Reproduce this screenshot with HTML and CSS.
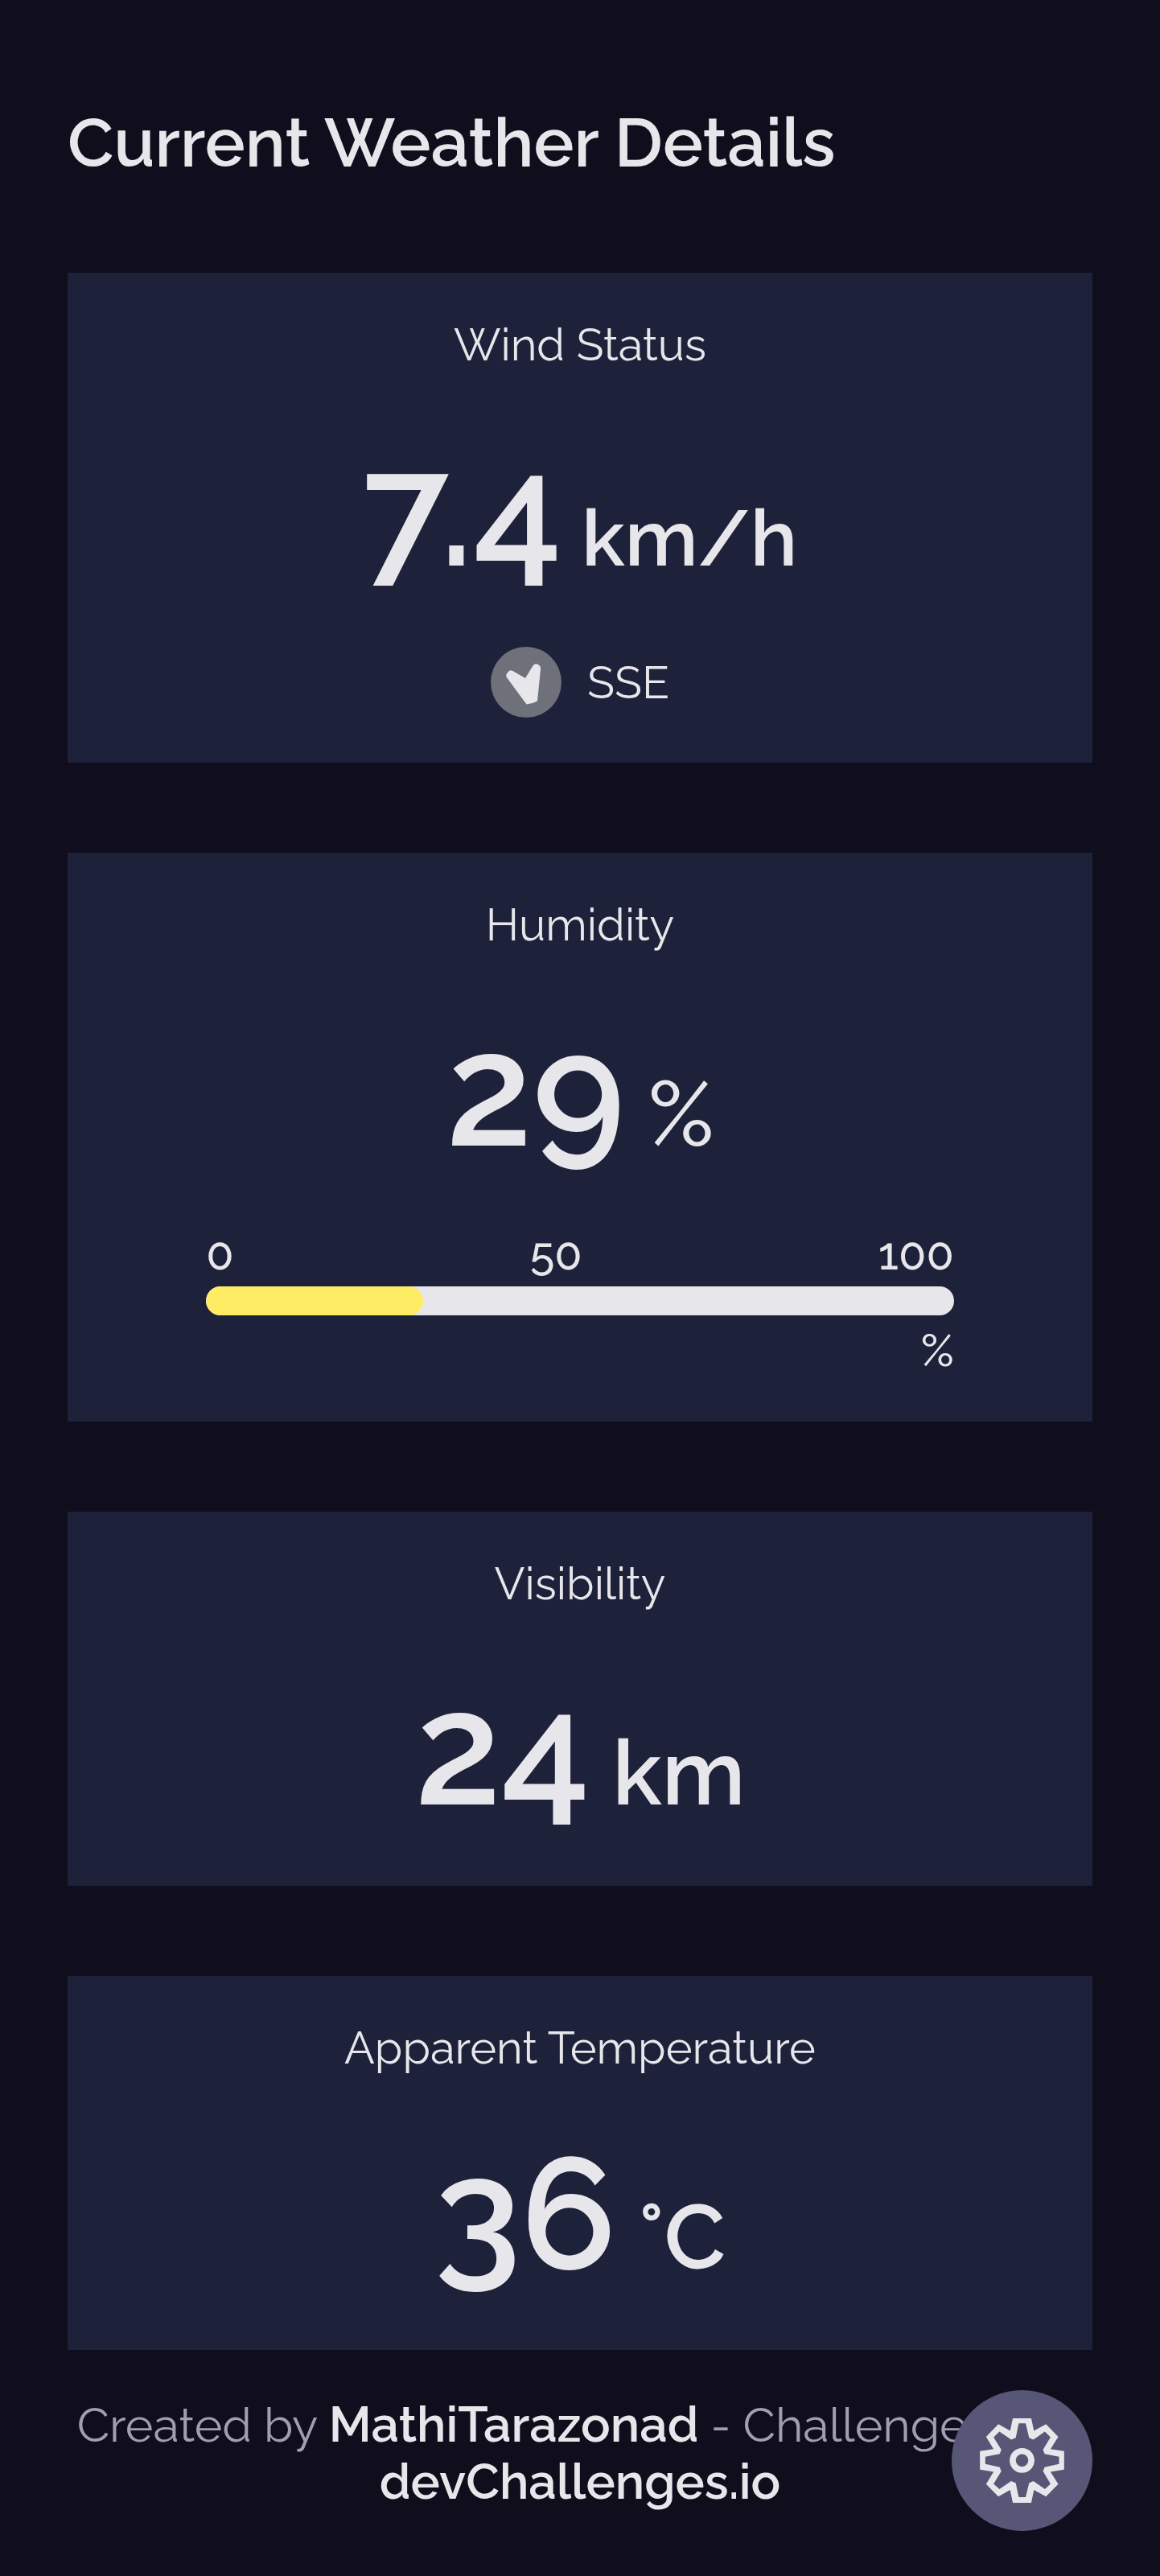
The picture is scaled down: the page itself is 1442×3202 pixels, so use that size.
FILE: index.html
```html
<!DOCTYPE html>
<html lang="en">
<head>
  <meta charset="utf-8">
  <meta name="viewport" content="width=device-width, initial-scale=1">
  <title>Weather App</title>
  <link rel="stylesheet" href="styles.css">
</head>
<body>
  <main class="details">
    <h1 class="details__title">Current Weather Details</h1>

    <section class="card card--extra">
      <h2 class="card__label">Wind Status</h2>
      <p class="card__value">7.4<span class="unit unit--speed"> km/h</span></p>
      <div class="wind">
        <svg class="wind__arrow" viewBox="0 0 88 88" aria-hidden="true">
          <circle cx="44" cy="44" r="44" fill="#6e707a"/>
          <path d="M19.500 37.500Q18.500 34.500 21 32Q23.500 28 27.500 30L43 39L52.500 23.500Q55 20 59 22Q62.500 24 62 28L58 67.500Q51.500 71 44.500 71.500Z" fill="#e7e7eb"/>
        </svg>
        <span class="wind__direction">SSE</span>
      </div>
    </section>

    <section class="card card--extra">
      <h2 class="card__label">Humidity</h2>
      <p class="card__value">29<span class="unit unit--percent"> %</span></p>
      <div class="meter">
        <div class="meter__scale"><span>0</span><span>50</span><span>100</span></div>
        <div class="meter__track"><div class="meter__fill" style="width: 29%"></div></div>
        <div class="meter__unit">%</div>
      </div>
    </section>

    <section class="card">
      <h2 class="card__label">Visibility</h2>
      <p class="card__value">24<span class="unit"> km</span></p>
    </section>

    <section class="card">
      <h2 class="card__label">Apparent Temperature</h2>
      <p class="card__value">36<span class="unit"> °C</span></p>
    </section>
  </main>

  <footer class="footer">
    Created by <a class="footer__link" href="#">MathiTarazonad</a> - Challenge from
    <a class="footer__link" href="#">devChallenges.io</a>
  </footer>

  <button class="settings" type="button" aria-label="Settings">
    <svg class="settings__icon" viewBox="144 139 315 316" aria-hidden="true">
      <path fill="currentColor" fill-rule="evenodd" d="M267 139H336L346 186L391 161L437 208L408 254L459 262V331L408 339L437 385L391 432L346 407L336 455H267L257 407L213 432L167 385L195 339L144 331V262L195 254L167 208L213 161L257 186ZM289 158L278 212L261 219L217 189L195 210L224 256L218 272L164 283V310L218 322L224 337L195 384L217 404L261 374L278 381L289 434H315L328 381L344 374L387 404L408 384L380 337L386 322L440 310V283L386 272L380 256L408 210L387 189L344 219L328 212L315 158Z"/>
      <circle cx="301.500" cy="296.500" r="35" fill="none" stroke="currentColor" stroke-width="23"/>
    </svg>
  </button>
</body>
</html>
```
FILE: styles.css
```css
* {
  box-sizing: border-box;
}

body {
  margin: 0;
  background: #100e1d;
  color: #e7e7eb;
  font-family: Raleway, Lato, sans-serif;
  font-size: 56px;
}

h1,
h2,
p {
  margin: 0;
}

.details {
  display: flex;
  flex-direction: column;
  gap: 112px;
  padding: 128px 84px 0;
}

.details__title {
  font-size: 84px;
  font-weight: 600;
}

.card {
  display: flex;
  flex-direction: column;
  align-items: center;
  padding: 56px 56px 55px;
  background: #1e213a;
}

.card--extra {
  padding-bottom: 56px;
}

.card__label {
  margin-bottom: 58px;
  font-size: 56px;
  font-weight: 400;
}

.card__value {
  font-size: 196px;
  font-weight: 600;
  white-space: nowrap;
}

.unit {
  font-size: 112px;
}

.unit--speed {
  font-size: 98px;
}

.unit--percent {
  font-weight: 500;
}

.wind {
  display: flex;
  align-items: center;
  gap: 32px;
  margin-top: 55px;
}

.wind__arrow {
  width: 88px;
  height: 88px;
}

.meter {
  width: 80%;
  margin-top: 55px;
  font-weight: 500;
}

.meter__scale {
  display: flex;
  justify-content: space-between;
}

.meter__track {
  height: 36px;
  margin: 8px 0 10px;
  overflow: hidden;
  border-radius: 18px;
  background: #e7e7eb;
}

.meter__fill {
  height: 100%;
  border-radius: 18px;
  background: #ffec65;
}

.meter__unit {
  text-align: right;
}

.footer {
  padding: 58px 84px 80px;
  color: #a09fb1;
  font-size: 59px;
  line-height: 70px;
  text-align: center;
}

.footer__link {
  color: #e7e7eb;
  font-size: 61px;
  font-weight: 600;
  text-decoration: none;
}

.settings {
  position: fixed;
  right: 84px;
  bottom: 56px;
  display: flex;
  align-items: center;
  justify-content: center;
  width: 175px;
  height: 175px;
  padding: 0;
  border: 0;
  border-radius: 50%;
  background: #585676;
  color: #e7e7eb;
}

.settings__icon {
  width: 105px;
  height: 105px;
}
```
